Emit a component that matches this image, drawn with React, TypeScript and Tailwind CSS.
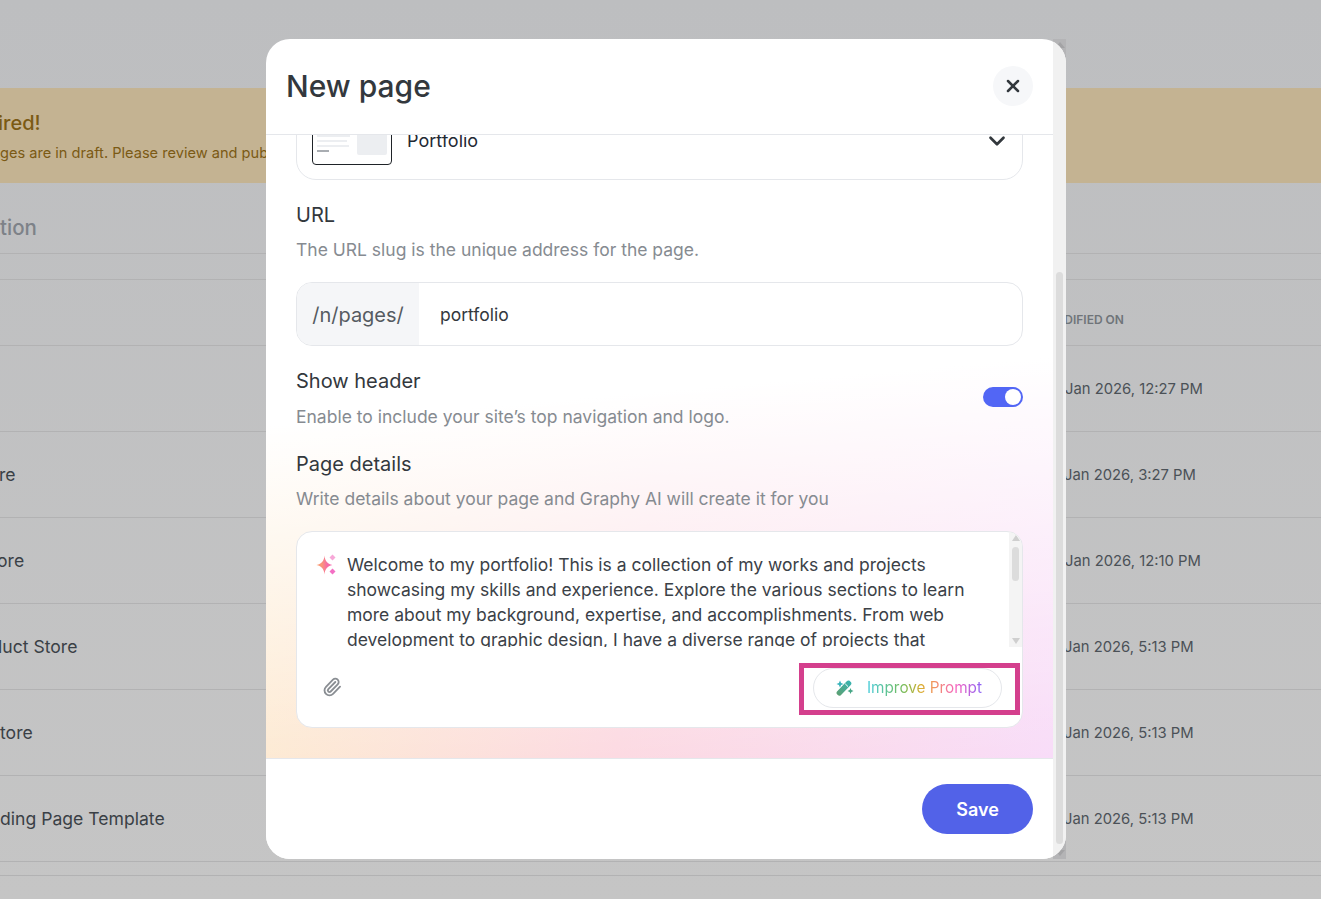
import React from 'react';
import { ChevronDown, Paperclip, X } from 'lucide-react';

const rows = [
    { name: '', nameClass: 'left-0', date: 'Jan 2026, 12:27 PM', dateClass: 'pl-[1065px]' },
    { name: 're', nameClass: '-left-[1px]', date: 'Jan 2026, 3:27 PM', dateClass: 'pl-[1064px]' },
    { name: 'ore', nameClass: '-left-[3px]', date: 'Jan 2026, 12:10 PM', dateClass: 'pl-[1065px]' },
    { name: 'luct Store', nameClass: '-left-[2px]', date: 'Jan 2026, 5:13 PM', dateClass: 'pl-[1064px]' },
    { name: 'tore', nameClass: 'left-0', date: 'Jan 2026, 5:13 PM', dateClass: 'pl-[1064px]' },
    { name: 'ding Page Template', nameClass: 'left-0', date: 'Jan 2026, 5:13 PM', dateClass: 'pl-[1064px]' },
];

const SparkleIcon: React.FC = () => (
    <svg width="22" height="22" viewBox="0 0 22 22">
        <defs>
            <linearGradient id="sparkle" x1="0" y1="0.5" x2="1" y2="0.5">
                <stop offset="0" stopColor="#fba36c" />
                <stop offset="1" stopColor="#f560b4" />
            </linearGradient>
        </defs>
        <path d="M8.5 1.5 C9 7 11 9.5 16.5 11 C11 12.5 9 15 8.5 20.5 C8 15 6 12.5 0.5 11 C6 9.5 8 7 8.5 1.5Z" fill="url(#sparkle)" />
        <path d="M8.5 5.5 L12.5 11 L8.5 16.5 L4.5 11Z" fill="url(#sparkle)" />
        <path d="M16.5 0.5 L19.5 3.5 L16.5 6.5 L13.5 3.5Z" fill="#f7a8d8" />
        <path d="M16.5 14.5 L19.5 17.5 L16.5 20.5 L13.5 17.5Z" fill="#f36fc4" />
    </svg>
);

const WandIcon: React.FC = () => (
    <svg width="18" height="16" viewBox="0 0 18 16">
        <defs>
            <linearGradient id="wand" x1="0" y1="1" x2="1" y2="0">
                <stop offset="0" stopColor="#5f9e6e" />
                <stop offset="1" stopColor="#35b5b5" />
            </linearGradient>
        </defs>
        <path d="M1 11.5 L10.5 1.5 C11.5 0.5 12.8 0.2 13.8 1 L15 2.2 C15.8 3.2 15.5 4.2 14.5 5.2 L4.8 15.2 C3.8 16 2.6 15.9 1.8 15 L1 14.2 C0.3 13.4 0.3 12.4 1 11.5Z" fill="url(#wand)" />
        <path d="M9.2 3.8 L12 6.6" stroke="#fff" strokeWidth="1" />
        <path d="M4 0.5 L5.1 3 L7.5 4 L5.1 5 L4 7.5 L2.9 5 L0.5 4 L2.9 3Z" fill="#38b3ba" />
        <path d="M14.5 8 L15.4 10.1 L17.5 11 L15.4 11.9 L14.5 14 L13.6 11.9 L11.5 11 L13.6 10.1Z" fill="#45a585" />
    </svg>
);

const Thumbnail: React.FC = () => (
    <div className="relative h-[50px] w-[80px] overflow-hidden rounded-[4px] border-[1.5px] border-[#1f2328] bg-white">
        <div className="absolute top-[2px] right-[4px] bottom-[9px] w-[30px] rounded-[2px] bg-[#eceef1]" />
        <div className="absolute left-[4px] bottom-[27px] h-[2px] w-[33px] bg-[#eceef1]" />
        <div className="absolute left-[4px] bottom-[22px] h-[2px] w-[30px] bg-[#eceef1]" />
        <div className="absolute left-[4px] bottom-[17px] h-[2px] w-[32px] bg-[#eceef1]" />
        <div className="absolute left-[4px] bottom-[12px] h-[2px] w-[12px] bg-[#a9adb2]" />
    </div>
);

const Background: React.FC = () => (
    <div className="flex h-[899px] flex-col overflow-hidden bg-[linear-gradient(to_bottom,#bdbec0,#c5c5c5)] font-['Inter',sans-serif]">
        <div className="mt-[88px] flex h-[95px] flex-col justify-center bg-[#c4b392] pt-[2px] text-[#7b5a14]">
            <p className="-ml-[2px] text-[20px] font-medium leading-7">ired!</p>
            <p className="mt-[4px] text-[14.6px] leading-6">ges are in draft. Please review and publish</p>
        </div>
        <div className="flex h-[71px] items-center border-b border-[#b2b2b3] pt-[20px] text-[20.5px] font-medium text-[#7d8288]">tion</div>
        <div className="flex h-[26px] border-b border-[#b2b2b3]" />
        <div className="flex h-[66px] items-center border-b border-[#b2b2b3] pl-[1044px] pt-[14px] text-[12px] font-semibold text-[#6f7479]">
            MODIFIED ON
        </div>
        {rows.map((row, i) => (
            <div key={i} className="relative flex h-[86px] items-center border-b border-[#b2b2b3] text-[#3a4046]">
                <span className={`${row.nameClass} absolute top-[31px] text-[17.6px] leading-6`}>{row.name}</span>
                <span className={`${row.dateClass} pt-[2px] text-[14.8px] text-[#4b5157]`}>{row.date}</span>
            </div>
        ))}
        <div className="h-[14px] border-b border-[#b2b2b3]" />
    </div>
);

const NewPageModal: React.FC = () => (
    <div className="absolute left-[266px] top-[39px] h-[820px] w-[800px] font-['Inter',sans-serif]">
        {/* page scrollbar corners showing past the rounded edge */}
        <div className="absolute inset-y-0 right-0 flex w-[13px] flex-col items-center justify-between bg-[#b4b4b6] py-[3px]">
            <div className="h-0 w-0 border-x-[5px] border-b-[6px] border-x-transparent border-b-[#a3a3a5]" />
            <div className="h-0 w-0 border-x-[5px] border-t-[6px] border-x-transparent border-t-[#a3a3a5]" />
        </div>
        <div className="relative flex h-full overflow-hidden rounded-[24px] bg-white">
            <div className="flex min-w-0 flex-1 flex-col">
                <header className="flex h-[96px] shrink-0 items-center justify-between border-b border-[#e5e7eb] pl-[20px] pr-[20px]">
                    <h1 className="text-[30px] font-medium text-[#33383d]">New page</h1>
                    <button className="-mt-[2px] flex h-10 w-10 items-center justify-center rounded-full bg-[#f6f7f9] text-[#33383d]">
                        <X size={20} strokeWidth={3} />
                    </button>
                </header>
                <div className="flex min-h-0 flex-1 flex-col overflow-hidden bg-[linear-gradient(175deg,#ffffff_42%,rgba(255,255,255,0)_100%),linear-gradient(98deg,#fdeac6_0%,#fcd6df_50%,#f8dcf8_100%)] px-[30px] pb-[30px]">
                    <div className="-mt-[35px] flex h-[80px] shrink-0 items-center gap-[15px] rounded-[20px] border border-[#e5e7eb] bg-white pl-[15px] pr-[12px]">
                        <Thumbnail />
                        <span className="flex-1 text-[18px] text-[#1f2933]">Portfolio</span>
                        <ChevronDown size={26} strokeWidth={2.5} className="mt-[2px] text-[#33383d]" />
                    </div>

                    <h2 className="mt-[21px] text-[20px] font-normal leading-7 text-[#33383d]">URL</h2>
                    <p className="mt-[7px] text-[17.5px] leading-7 text-[#868b91]">The URL slug is the unique address for the page.</p>
                    <div className="mt-[18px] flex h-[64px] shrink-0 overflow-hidden rounded-2xl border border-[#e5e7eb] bg-white">
                        <div className="flex w-[122px] items-center justify-center bg-[#f5f6f8] pt-[1px] text-[20px] text-[#555b61]">/n/pages/</div>
                        <div className="flex flex-1 items-center pl-[21px] pt-[2px] text-[17.5px] text-[#33383d]">portfolio</div>
                    </div>

                    <div className="mt-[21px] flex items-center justify-between">
                        <div>
                            <h2 className="text-[20px] font-normal leading-7 text-[#33383d]">Show header</h2>
                            <p className="mt-[8px] text-[17.5px] leading-7 text-[#868b91]">Enable to include your site’s top navigation and logo.</p>
                        </div>
                        <div className="-mt-[4px] flex h-5 w-10 items-center justify-end rounded-full bg-[#5266f5] pr-[2px]">
                            <div className="h-4 w-4 rounded-full bg-white" />
                        </div>
                    </div>

                    <h2 className="mt-[19px] text-[20px] font-normal leading-7 text-[#33383d]">Page details</h2>
                    <p className="mt-[7px] text-[17.5px] leading-7 text-[#868b91]">Write details about your page and Graphy AI will create it for you</p>

                    <div className="mt-[18px] h-[197px] shrink-0 overflow-hidden rounded-2xl border border-[#e5e7eb] bg-white">
                        <div className="flex h-[115px]">
                            <div className="flex min-w-0 flex-1 overflow-hidden pl-[19px] pt-[20px]">
                                <div className="shrink-0 pt-[2px]"><SparkleIcon /></div>
                                <p className="ml-[9px] w-[625px] shrink-0 text-[17.5px] leading-[25px] text-[#3b4147]">
                                    Welcome to my portfolio! This is a collection of my works and projects showcasing my skills and experience. Explore the various sections to learn more about my background, expertise, and accomplishments. From web development to graphic design, I have a diverse range of projects that
                                </p>
                            </div>
                            <div className="flex w-[13px] shrink-0 flex-col items-center bg-[#f4f4f4] pt-[3px] pb-[3px]">
                                <div className="h-0 w-0 border-x-[4px] border-b-[6px] border-x-transparent border-b-[#cfcfcf]" />
                                <div className="mt-[6px] h-[34px] w-[7px] rounded-full bg-[#dcdcdc]" />
                                <div className="mt-auto h-0 w-0 border-x-[4px] border-t-[6px] border-x-transparent border-t-[#cfcfcf]" />
                            </div>
                        </div>
                        <div className="flex items-start justify-between pl-[25px] pr-[20px] pt-[21px]">
                            <Paperclip size={20} strokeWidth={2.2} className="mt-[9px] text-[#8a8e93]" />
                            <div className="relative">
                                <div className="absolute -bottom-[7px] -left-[14px] -right-[18px] -top-[5px] border-[5px] border-[#d43f8d]" />
                                <button className="flex h-10 w-[189px] items-center justify-center gap-[13px] rounded-full border border-[#e5e7eb] bg-white pl-[3px]">
                                    <WandIcon />
                                    <span className="bg-[linear-gradient(90deg,#45cbdc,#76bb55_32%,#d9ae30_47%,#f2955f_58%,#f562c2_78%,#8a62f7)] bg-clip-text text-[15.3px] font-normal text-transparent">
                                        Improve Prompt
                                    </span>
                                </button>
                            </div>
                        </div>
                    </div>
                </div>
                <footer className="flex h-[101px] shrink-0 items-center justify-end border-t border-[#e5e7eb] bg-white pr-[20px]">
                    <button className="h-[50px] w-[111px] rounded-full bg-[#5262e8] text-[18px] font-semibold text-white">Save</button>
                </footer>
            </div>
            {/* modal's own scrollbar */}
            <div className="flex w-[13px] shrink-0 flex-col items-center bg-[#f1f1f1] pb-[15px] pt-[233px]">
                <div className="w-[7px] flex-1 rounded-full bg-[#dcdcdc]" />
            </div>
        </div>
    </div>
);

const App: React.FC = () => (
    <div className="relative h-[899px] w-full overflow-hidden">
        <Background />
        <NewPageModal />
    </div>
);

export default App;
